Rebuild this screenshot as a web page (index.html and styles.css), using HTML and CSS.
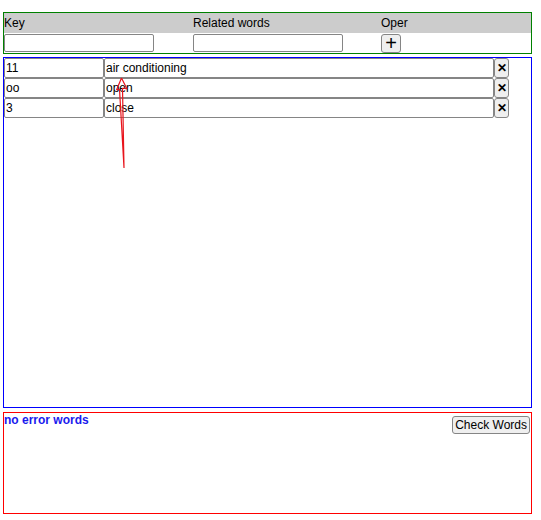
FILE: index.html
```html
<!DOCTYPE html>
<html>
<head>
<meta charset="utf-8">
<link rel="stylesheet" href="styles.css">
</head>
<body>
<div class="page">
  <div class="head-box">
    <div class="head-labels">
      <span>Key</span>
      <span>Related words</span>
      <span>Oper</span>
    </div>
    <div class="head-inputs">
      <div class="cell"><input class="inp head-inp" type="text"></div>
      <div class="cell"><input class="inp head-inp" type="text"></div>
      <div class="cell"><button class="btn plus">+</button></div>
    </div>
  </div>

  <div class="list-box">
    <div class="row">
      <input class="inp key" type="text" value="11">
      <input class="inp word" type="text" value="air conditioning">
      <button class="btn del">✕</button>
    </div>
    <div class="row">
      <input class="inp key" type="text" value="oo">
      <input class="inp word" type="text" value="open">
      <button class="btn del">✕</button>
    </div>
    <div class="row">
      <input class="inp key" type="text" value="3">
      <input class="inp word" type="text" value="close">
      <button class="btn del">✕</button>
    </div>
    <svg class="arrow" width="20" height="100" viewBox="112 74 20 100">
      <path d="M124 168 L119.5 89 M124 168 L122.5 88 M121.5 78 L116.5 90 M121.5 78 L127 89 M116.5 90 L119.5 89 M127 89 L122.5 88" fill="none" stroke="#e8141c" stroke-width="1.2"/>
    </svg>
  </div>

  <div class="check-box">
    <span class="status">no error words</span>
    <button class="btn check">Check Words</button>
  </div>
</div>
</body>
</html>
```

FILE: styles.css
```css
html, body {
  margin: 0;
  padding: 0;
  background: #fff;
}
body {
  font-family: "Liberation Sans", Arial, sans-serif;
  font-size: 12px;
  color: #000;
}
.page {
  padding: 12px 0 0 3px;
  width: 529px;
}
.head-box {
  border: 1px solid #008000;
  height: 40px;
}
.head-labels {
  background: #cccccc;
  height: 20px;
  display: grid;
  grid-template-columns: 189px 188px 1fr;
  line-height: 20px;
}
.head-inputs {
  display: grid;
  grid-template-columns: 189px 188px 1fr;
  padding-top: 1px;
}
.cell {
  display: flex;
}
.inp {
  box-sizing: border-box;
  height: 19px;
  margin: 0;
  border: 1px solid #858585;
  border-radius: 2px;
  padding: 0 1px;
  font-family: "Liberation Sans", Arial, sans-serif;
  font-size: 12px;
  color: #000;
  background: #fff;
  outline: none;
}
.head-inp {
  width: 150px;
  height: 18px;
}
.btn {
  box-sizing: border-box;
  margin: 0;
  border: 1px solid #858585;
  border-radius: 3px;
  background: #efefef;
  font-family: "Liberation Sans", Arial, sans-serif;
  color: #000;
  padding: 0;
  cursor: pointer;
}
.plus {
  width: 20px;
  height: 19px;
  font-size: 20px;
  line-height: 15px;
  font-weight: normal;
}
.list-box {
  position: relative;
  margin-top: 3px;
  border: 1px solid #0000ff;
  height: 349px;
}
.row {
  display: flex;
  height: 20px;
}
.key {
  width: 100px;
  height: 20px;
}
.word {
  width: 390px;
  height: 20px;
}
.del {
  width: 15px;
  height: 20px;
  font-size: 12px;
  font-weight: bold;
  line-height: 16px;
  align-self: flex-start;
}
.arrow {
  position: absolute;
  left: 108px;
  top: 16px;
  pointer-events: none;
}
.check-box {
  margin-top: 4px;
  border: 1px solid #ff0000;
  height: 100px;
  display: flex;
  justify-content: space-between;
  align-items: flex-start;
}
.status {
  color: #1a1aee;
  font-weight: bold;
  font-size: 12px;
  line-height: 14px;
}
.check {
  margin: 3px 1px 0 0;
  height: 18px;
  padding: 0 2px;
  font-size: 12px;
  line-height: 14px;
}
```
